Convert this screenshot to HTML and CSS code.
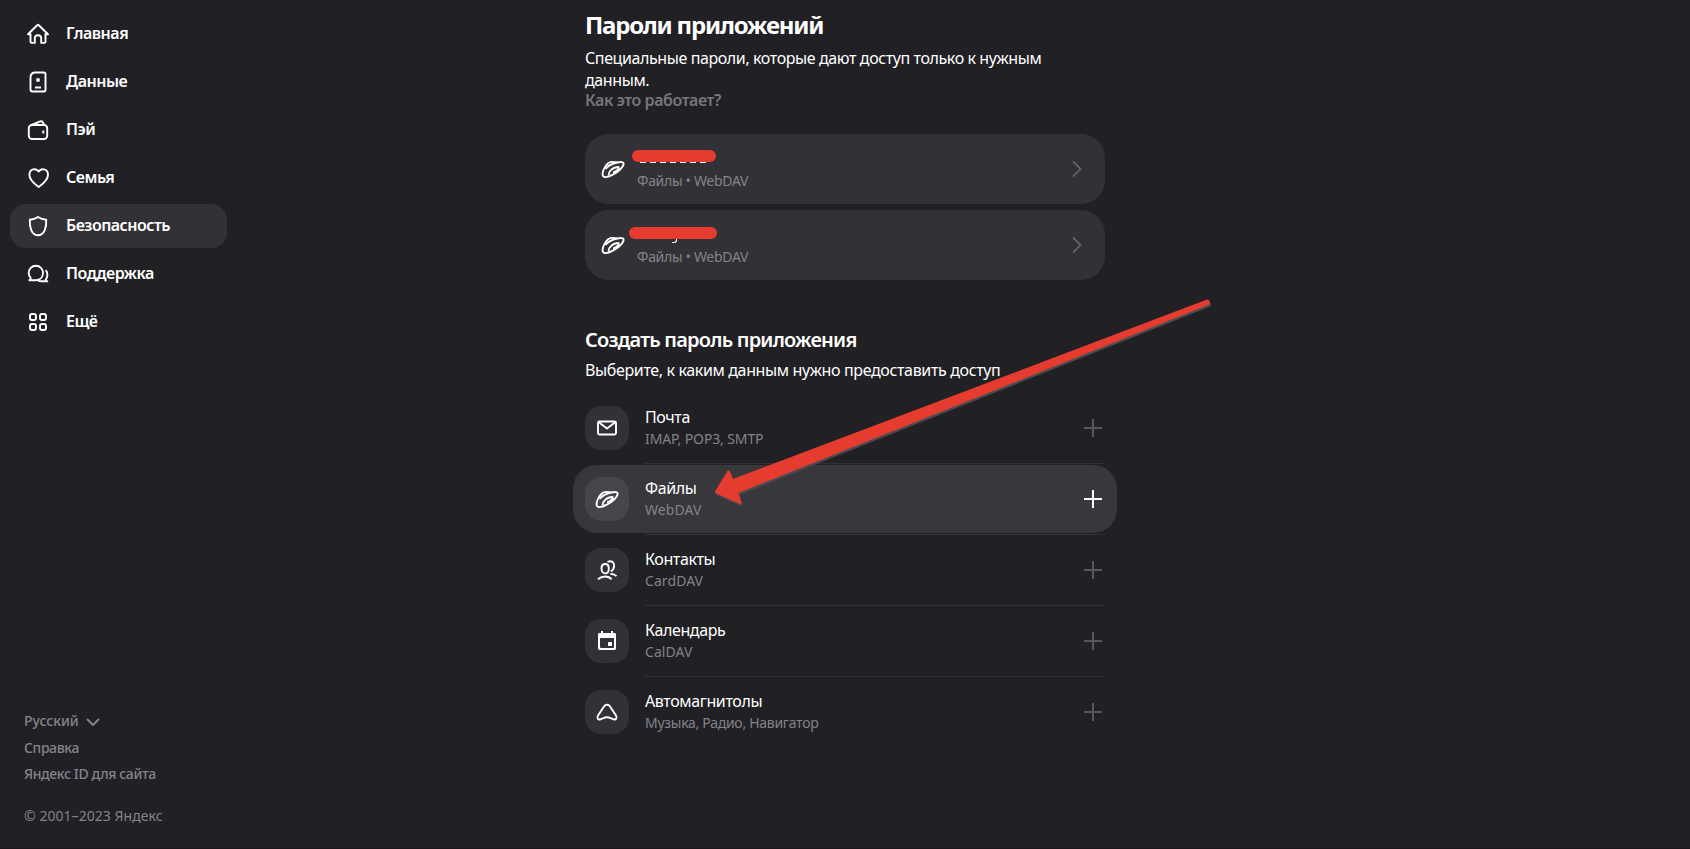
FILE: index.html
```
<!doctype html>
<html lang="ru">
<head>
    <meta charset="utf-8">
    <title>Пароли приложений</title>
    <link rel="stylesheet" href="styles.css">
</head>
<body>
<svg class="defs" width="0" height="0">
    <symbol id="planet" viewBox="0 0 24 24">
        <path d="M2 19c-1.500-3 1.600-10 5.400-13 3-2 6.900-1 8.700-.5 3.400-.6 6.500-.9 6.500 1.300 0 3.400-6.400 8.700-10.800 10.800C8 19.700 3.500 21 2 19z"/>
        <path d="M4.500 11.800c3-3.400 7.300-5.400 11.600-6.300M7.600 18.300c-.3-3.500 3.700-8.200 10-8.300 1 1.800-2 4.400-5.600 5.300"/>
    </symbol>
    <symbol id="plus" viewBox="0 0 18 18"><path d="M9 0v18M0 9h18"/></symbol>
    <symbol id="chevron" viewBox="0 0 10 16"><path d="M1 .5 8.500 8 1 15.500"/></symbol>
</svg>

<div class="page">
    <div class="sidebar">
        <nav class="menu">
            <a class="menu-item">
                <svg class="icon" viewBox="0 0 24 24"><path d="M2 12.300 11.200 3.200a1.200 1.200 0 0 1 1.600 0L22 12.300h-2.500v7.400c0 .8-.4 1.200-1.200 1.200h-3.100v-4.700c0-4-6.400-4-6.400 0v4.700H5.700c-.8 0-1.200-.4-1.200-1.200v-7.400z"/></svg>
                <span>Главная</span>
            </a>
            <a class="menu-item">
                <svg class="icon" viewBox="0 0 24 24"><path d="M9.500 2.500h8.300c1 0 1.700.7 1.700 1.700v15.600c0 1-.7 1.700-1.700 1.700H6.200c-1 0-1.700-.7-1.700-1.700V7.500c0-3 2-5 5-5zM9 17.500h6"/><circle class="solid" cx="12" cy="10" r="2"/></svg>
                <span>Данные</span>
            </a>
            <a class="menu-item">
                <svg class="icon" viewBox="0 0 24 24"><rect x="2.800" y="7" width="18.400" height="14" rx="3.200"/><path d="M4.500 7.300 14 3.500c1.500-.6 2.500 0 3.200 1.500l1 2M17.300 12.500v3"/></svg>
                <span>Пэй</span>
            </a>
            <a class="menu-item">
                <svg class="icon" viewBox="0 0 24 24"><path d="M12.700 5.500C15 1.900 22 2.300 22 9c0 5.200-5.500 9.300-9.300 12.100C8.900 18.300 3.400 14.200 3.400 9c0-6.700 7-7.100 9.300-3.500z"/></svg>
                <span>Семья</span>
            </a>
            <a class="menu-item active">
                <svg class="icon" viewBox="0 0 24 24"><path d="M12 3c2.500 1.700 5.200 2.500 8.200 2.800.4 7.400-1.800 15.400-8.200 15.400S3.400 13.200 3.800 5.800C6.800 5.500 9.500 4.700 12 3z"/></svg>
                <span>Безопасность</span>
            </a>
            <a class="menu-item">
                <svg class="icon" viewBox="0 0 24 24"><path d="M3.300 18.200h6.400c4.400 0 7.300-3 7.300-7.200S14 3.800 9.900 3.800s-7.200 3-7.200 7.200c0 2.200.8 3.700 2 5 .2 1-.5 1.800-1.400 2.200zM19.800 8.200c2.300 3 2 7.200-.1 9.400.1.700.6 1.300 1.600 1.700h-5.500c-1.700 0-2.700-.2-4-.8"/></svg>
                <span>Поддержка</span>
            </a>
            <a class="menu-item">
                <svg class="icon" viewBox="0 0 24 24"><rect x="4" y="4" width="6" height="6" rx="2"/><rect x="14" y="4" width="6" height="6" rx="2"/><rect x="4" y="14" width="6" height="6" rx="2"/><rect x="14" y="14" width="6" height="6" rx="2"/></svg>
                <span>Ещё</span>
            </a>
        </nav>
        <footer class="footer">
            <a class="lang">Русский <svg class="lang-arrow" viewBox="0 0 14 8"><path d="M1 1l6 6 6-6"/></svg></a>
            <a>Справка</a>
            <a>Яндекс ID для сайта</a>
            <div class="copyright">© 2001–2023 Яндекс</div>
        </footer>
    </div>

    <main class="content">
        <h1>Пароли приложений</h1>
        <p class="lead">Специальные пароли, которые дают доступ только к нужным<br>данным.</p>
        <a class="how">Как это работает?</a>

        <div class="cards">
            <a class="card">
                <svg class="icon"><use href="#planet"/></svg>
                <div class="card-text">
                    <div class="mask"></div>
                    <div class="sub">Файлы • WebDAV</div>
                </div>
                <svg class="chevron"><use href="#chevron"/></svg>
            </a>
            <a class="card">
                <svg class="icon"><use href="#planet"/></svg>
                <div class="card-text">
                    <div class="mask mask-wide"></div>
                    <div class="sub">Файлы • WebDAV</div>
                </div>
                <svg class="chevron"><use href="#chevron"/></svg>
            </a>
        </div>

        <h2>Создать пароль приложения</h2>
        <p class="hint">Выберите, к каким данным нужно предоставить доступ</p>

        <div class="list">
            <a class="row">
                <div class="tile"><svg class="icon" viewBox="0 0 24 24"><rect x="3" y="5.500" width="18" height="13" rx="1.500"/><path d="M3.500 6l8.500 6.500L20.500 6"/></svg></div>
                <div class="row-body">
                    <div>
                        <div class="name">Почта</div>
                        <div class="sub sub-mail">IMAP, POP3, SMTP</div>
                    </div>
                    <svg class="plus"><use href="#plus"/></svg>
                </div>
            </a>
            <a class="row hover">
                <div class="tile"><svg class="icon"><use href="#planet"/></svg></div>
                <div class="row-body">
                    <div>
                        <div class="name">Файлы</div>
                        <div class="sub sub-short">WebDAV</div>
                    </div>
                    <svg class="plus"><use href="#plus"/></svg>
                </div>
            </a>
            <a class="row">
                <div class="tile"><svg class="icon" viewBox="0 0 24 24"><path d="M10.200 6c2.200 0 3.600 1.800 3.600 4.500s-1.400 4.900-3.600 4.900-3.700-2.200-3.700-4.900S8 6 10.200 6zM3 21.300c4-3.800 10.500-3.800 13.600 0M12.500 4c4-2.200 6.900.5 6.600 4-.2 2.500-1.300 4.500-3.300 5.300M15.500 16c2.500-.3 4.500.6 6 2.200"/></svg></div>
                <div class="row-body">
                    <div>
                        <div class="name">Контакты</div>
                        <div class="sub sub-short">CardDAV</div>
                    </div>
                    <svg class="plus"><use href="#plus"/></svg>
                </div>
            </a>
            <a class="row">
                <div class="tile"><svg class="icon" viewBox="0 0 24 24"><path class="solid" fill-rule="evenodd" d="M6 2h2v2h8V2h2v2h1.500C20.500 4 21 4.600 21 5.500v13.700c0 1-.8 1.800-1.800 1.800H4.800C3.800 21 3 20.200 3 19.200V5.500C3 4.600 3.500 4 4.500 4H6zM5 9v8.500c0 1 .5 1.500 1.500 1.500h11c1 0 1.500-.5 1.500-1.500V9z"/><rect class="solid" x="13" y="13" width="4" height="4" rx=".6"/></svg></div>
                <div class="row-body">
                    <div>
                        <div class="name">Календарь</div>
                        <div class="sub sub-short">CalDAV</div>
                    </div>
                    <svg class="plus"><use href="#plus"/></svg>
                </div>
            </a>
            <a class="row">
                <div class="tile"><svg class="icon" viewBox="0 0 24 24"><path d="M12 4.800c1.200 0 2.200.5 3 1.600l6 9.200c1.600 2.500-.2 4.400-2.500 3.700-2.600-.9-4.300-2-6.500-2s-3.900 1.100-6.500 2c-2.300.7-4.100-1.200-2.500-3.700l6-9.200c.8-1.100 1.800-1.600 3-1.600z"/></svg></div>
                <div class="row-body">
                    <div>
                        <div class="name">Автомагнитолы</div>
                        <div class="sub">Музыка, Радио, Навигатор</div>
                    </div>
                    <svg class="plus"><use href="#plus"/></svg>
                </div>
            </a>
        </div>
    </main>
</div>

<svg class="arrow" viewBox="0 0 510 220">
    <path d="M497.500 11 22 191 18.500 182 6.500 202 30 212.500 26.500 202 498.500 13z"/>
</svg>
</body>
</html>
```
FILE: styles.css
```
* { box-sizing: border-box; }

body {
    position: relative;
    margin: 0;
    height: 849px;
    overflow: hidden;
    background: #212024;
    border-bottom: 1px solid #1b151c;
    color: #fff;
    font: 16px/22px "Noto Sans", sans-serif;
    letter-spacing: -.38px;
}

h1, h2, p { margin: 0; }

.defs { position: absolute; }

svg {
    flex: none;
    fill: none;
    stroke: currentColor;
}

.icon {
    width: 24px;
    height: 24px;
    stroke-width: 1.9;
    stroke-linejoin: round;
}

.solid {
    fill: currentColor;
    stroke: none;
}

.page {
    display: grid;
    grid-template-columns: 585px 520px;
    height: 848px;
}

/* sidebar */
.sidebar {
    display: flex;
    flex-direction: column;
    justify-content: space-between;
    padding: 12px 0 19px 10px;
}

.menu {
    display: flex;
    flex-direction: column;
    gap: 4px;
    width: 217px;
}

.menu-item {
    display: flex;
    align-items: center;
    gap: 16px;
    height: 44px;
    padding: 0 16px 2px;
    border-radius: 16px;
    font-weight: 600;
    letter-spacing: -.5px;
}

.menu-item .icon {
    position: relative;
    top: 1px;
}

.menu-item.active { background: #323135; }

.footer {
    padding-left: 14px;
    color: #84838a;
    font-size: 14px;
    font-weight: 500;
    line-height: 26.500px;
}

.footer a { display: block; }

.footer .lang { letter-spacing: -.05px; }

.lang-arrow {
    width: 14px;
    height: 8px;
    margin-left: 4px;
    stroke-width: 2;
}

.copyright {
    margin-top: 15px;
    font-weight: 400;
    letter-spacing: .05px;
}

/* content */
.content { padding-top: 9px; }

h1 {
    font-size: 24px;
    line-height: 32px;
    font-weight: 700;
    letter-spacing: -1.22px;
}

.lead {
    margin-top: 6px;
    letter-spacing: -.4px;
}

.how {
    display: block;
    margin-top: -2px;
    color: #77767c;
    font-weight: 600;
    letter-spacing: -.42px;
}

.cards {
    display: flex;
    flex-direction: column;
    gap: 6px;
    margin-top: 23px;
}

.card {
    display: flex;
    align-items: center;
    height: 70px;
    padding: 0 23px 0 16px;
    border-radius: 24px;
    background: #323135;
}

.card-text {
    flex: 1;
    margin-left: 12px;
}

/* red stroke over the password name */
.mask {
    position: relative;
    width: 84px;
    height: 12px;
    margin: 2px 0 10px -5px;
    border-radius: 6px;
    background: #e63c30;
}

.mask::after {
    content: "";
    position: absolute;
    left: 8px;
    top: 12px;
    width: 67px;
    height: 1px;
    background: repeating-linear-gradient(90deg, #fff 0 6px, transparent 6px 10px);
}

.mask-wide {
    width: 88px;
    margin: 3px 0 9px -8px;
}

.mask-wide::after {
    left: 43px;
    width: 4px;
    height: 3px;
    border: solid #fff;
    border-width: 0 1px 1px 0;
    border-radius: 0 0 3px;
    background: none;
}

.sub {
    color: #84838a;
    font-size: 14px;
    line-height: 18px;
    letter-spacing: -.28px;
}

.card .sub { letter-spacing: -.3px; }

.sub-mail { letter-spacing: -.12px; }

.sub-short { letter-spacing: .08px; }

.chevron {
    width: 10px;
    height: 16px;
    color: #68676d;
    stroke-width: 1.7;
}

h2 {
    margin-top: 48px;
    font-size: 20px;
    line-height: 24px;
    font-weight: 600;
    letter-spacing: -.78px;
}

.hint {
    margin-top: 7px;
    letter-spacing: -.36px;
}

.list { margin-top: 12px; }

.row {
    display: flex;
    align-items: center;
    position: relative;
    height: 71px;
}

/* highlight sticks out 12px to both sides of the list */
.row.hover::before {
    content: "";
    position: absolute;
    inset: 1px -12px 2px;
    border-radius: 24px;
    background: #38373b;
}

.tile {
    position: relative;
    display: flex;
    align-items: center;
    justify-content: center;
    width: 44px;
    height: 44px;
    margin-bottom: 1px;
    border-radius: 16px;
    background: #323135;
}

.hover .tile { background: #464549; }

.row-body {
    position: relative;
    flex: 1;
    display: flex;
    align-items: center;
    justify-content: space-between;
    height: 71px;
    margin-left: 16px;
    padding-right: 3px;
    border-bottom: 1px solid #323135;
}

.row:last-child .row-body { border-color: transparent; }

.name { margin: -2px 0 2px; }

.plus {
    width: 18px;
    height: 18px;
    color: #58575d;
    stroke-width: 2;
}

.hover .plus { color: #fff; }

/* pointer over the page */
.arrow {
    position: absolute;
    left: 710px;
    top: 290px;
    width: 510px;
    height: 220px;
    fill: #e63c30;
    stroke: #e63c30;
    stroke-width: 3;
    stroke-linejoin: round;
    filter: drop-shadow(1px 2px 0 #4c4b4f);
}
```
